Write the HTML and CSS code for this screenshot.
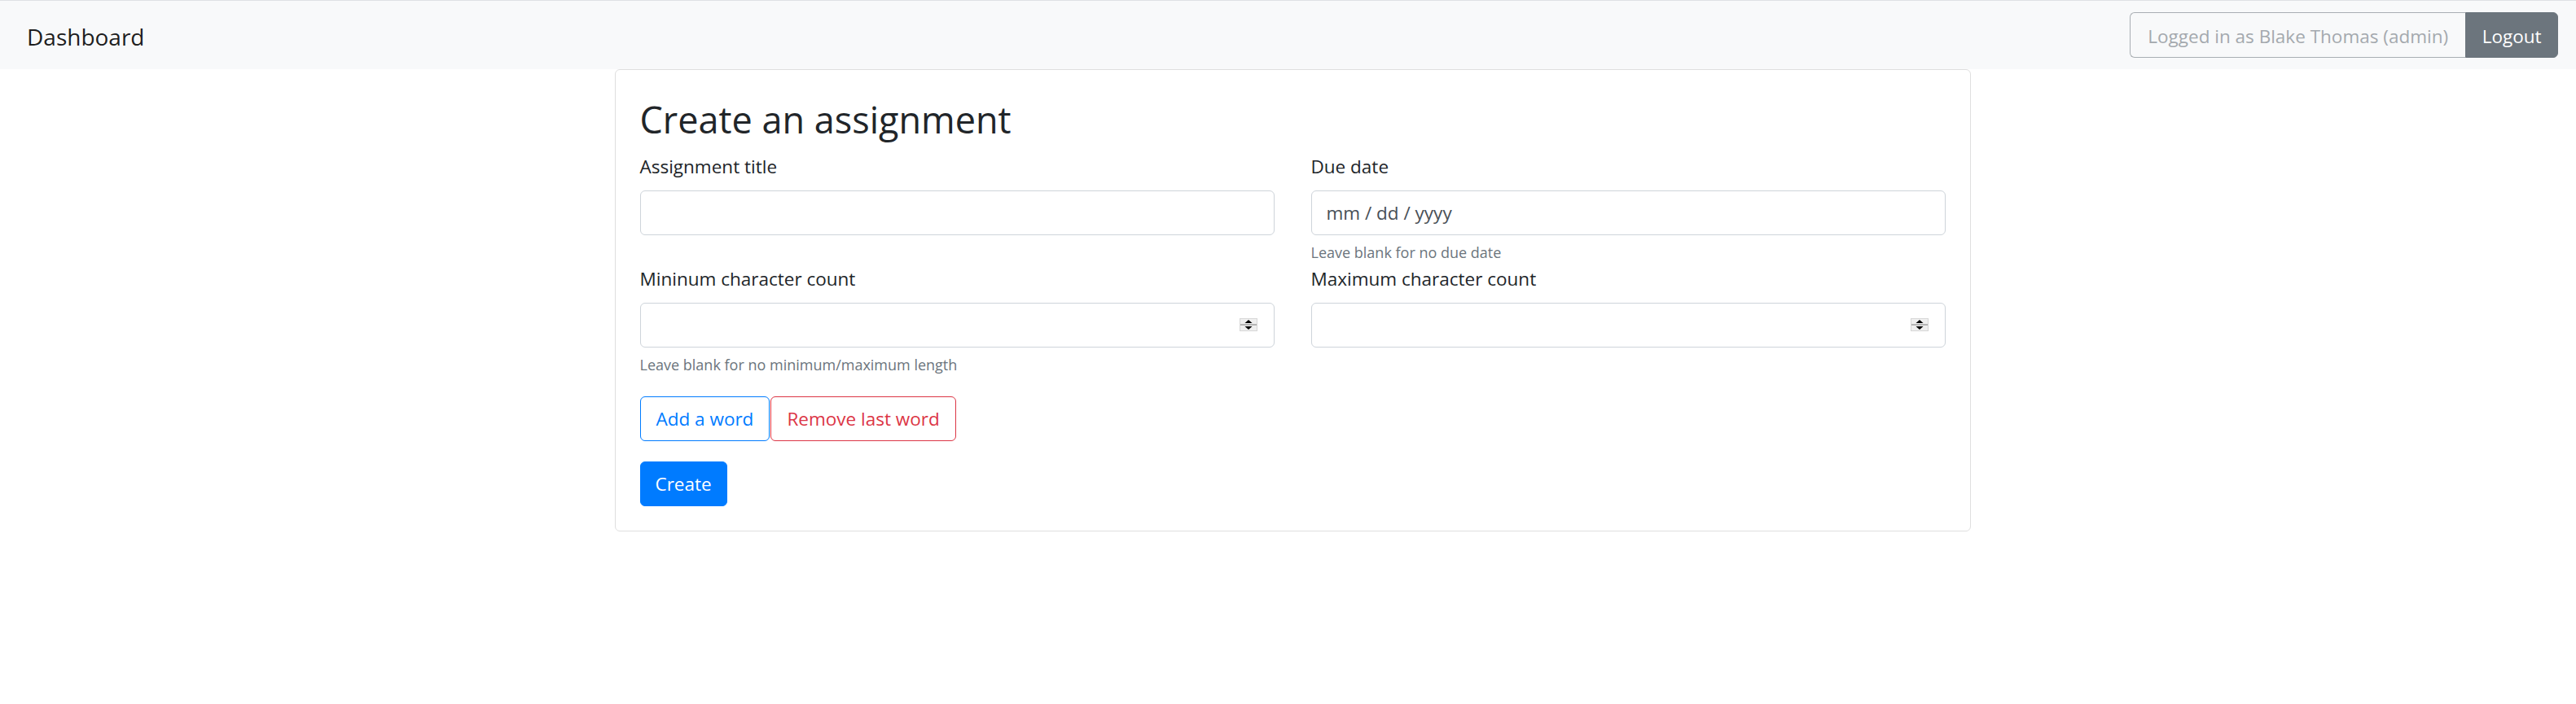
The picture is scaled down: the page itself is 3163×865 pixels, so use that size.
FILE: index.html
```html
<!DOCTYPE html>
<html lang="en">
<head>
<meta charset="utf-8">
<title>Create an assignment</title>
<link rel="stylesheet" href="styles.css">
</head>
<body>
<nav class="navbar">
  <a class="brand" href="#">Dashboard</a>
  <div class="user-group">
    <span class="user-label">Logged in as Blake Thomas (admin)</span>
    <button class="btn-logout" type="button">Logout</button>
  </div>
</nav>
<main class="main">
  <section class="card">
    <h2 class="card-title">Create an assignment</h2>
    <form class="form-grid">
      <div class="field">
        <label class="field-label">Assignment title</label>
        <div class="control"><input class="control-input" type="text"></div>
      </div>
      <div class="field">
        <label class="field-label">Due date</label>
        <div class="control"><input class="control-input date-input" type="text" placeholder="mm / dd / yyyy"></div>
        <small class="help">Leave blank for no due date</small>
      </div>
      <div class="field">
        <label class="field-label">Mininum character count</label>
        <div class="control number">
          <input class="control-input" type="text">
          <svg class="spin" width="22" height="16" viewBox="0 0 22 16" aria-hidden="true">
            <rect x="0.5" y="0.5" width="21" height="15" fill="#efefef" stroke="#d6d6d6"/>
            <rect x="1" y="7" width="20" height="2" fill="#b4b4b4"/>
            <polygon points="11,2 6.5,6 15.5,6" fill="#000"/>
            <polygon points="6.5,10 15.5,10 11,14" fill="#000"/>
          </svg>
        </div>
        <small class="help">Leave blank for no minimum/maximum length</small>
      </div>
      <div class="field">
        <label class="field-label">Maximum character count</label>
        <div class="control number">
          <input class="control-input" type="text">
          <svg class="spin" width="22" height="16" viewBox="0 0 22 16" aria-hidden="true">
            <rect x="0.5" y="0.5" width="21" height="15" fill="#efefef" stroke="#d6d6d6"/>
            <rect x="1" y="7" width="20" height="2" fill="#b4b4b4"/>
            <polygon points="11,2 6.5,6 15.5,6" fill="#000"/>
            <polygon points="6.5,10 15.5,10 11,14" fill="#000"/>
          </svg>
        </div>
      </div>
    </form>
    <div class="word-buttons">
      <button class="btn btn-outline-primary" type="button">Add a word</button>
      <button class="btn btn-outline-danger" type="button">Remove last word</button>
    </div>
    <div class="actions">
      <button class="btn btn-primary" type="button">Create</button>
    </div>
  </section>
</main>
</body>
</html>
```
FILE: styles.css
```css
* {
  box-sizing: border-box;
}

body {
  margin: 0;
  background: #ffffff;
  font-family: "Open Sans", "Noto Sans", sans-serif;
  font-size: 22.5px;
  color: #212529;
}

.navbar {
  display: flex;
  align-items: center;
  justify-content: space-between;
  height: 85px;
  padding: 0 22px 0 33px;
  background: #f8f9fa;
  border-top: 1px solid #dfe1e4;
}

.brand {
  margin-top: 4px;
  font-size: 28px;
  line-height: 42px;
  color: rgba(0, 0, 0, 0.9);
  text-decoration: none;
}

.user-group {
  display: flex;
  height: 56px;
}

.user-label {
  display: flex;
  align-items: center;
  padding: 2px 21px 0 21px;
  border: 1px solid #a9aeb3;
  border-right: none;
  border-radius: 6px 0 0 6px;
  color: #a4a9ae;
  font-size: 22.5px;
  white-space: nowrap;
}

.btn-logout {
  padding: 2px 19.5px 0;
  border: 1px solid #6c757d;
  border-radius: 0 6px 6px 0;
  background: #6c757d;
  color: #ffffff;
  font-family: inherit;
  font-size: 22.5px;
}

.main {
  display: flex;
  justify-content: center;
  padding-left: 11px;
}

.card {
  width: 1665px;
  padding: 30px;
  border: 1px solid #dfdfdf;
  border-radius: 6px;
  background: #ffffff;
}

.card-title {
  margin: 0 0 9px;
  font-size: 45px;
  font-weight: 400;
  line-height: 62px;
  color: #212529;
}

.form-grid {
  display: grid;
  grid-template-columns: 1fr 1fr;
  column-gap: 45px;
  align-items: start;
  margin: 0;
}

.field {
  display: flex;
  flex-direction: column;
}

.field-label {
  display: block;
  margin-bottom: 11px;
  font-size: 22.5px;
  line-height: 36px;
  color: #212529;
}

.control {
  display: flex;
  align-items: center;
  height: 55px;
  border: 1px solid #ced4da;
  border-radius: 6px;
  background: #ffffff;
}

.control-input {
  flex: 1;
  min-width: 0;
  height: 100%;
  padding: 0 18px;
  border: none;
  outline: none;
  background: transparent;
  font-family: inherit;
  font-size: 22.5px;
  color: #495057;
}

.date-input::placeholder {
  color: #495057;
  opacity: 1;
}

.number {
  padding-right: 20px;
}

.spin {
  flex: none;
  display: block;
}

.help {
  display: block;
  margin-top: 7px;
  font-size: 18px;
  line-height: 28.8px;
  color: #6c757d;
}

.word-buttons {
  display: flex;
  gap: 1px;
  margin-top: 24px;
}

.actions {
  display: flex;
  margin-top: 25px;
}

.btn {
  height: 55px;
  padding: 2px 19px 0;
  border: 1px solid transparent;
  border-radius: 6px;
  background: #ffffff;
  font-family: inherit;
  font-size: 22.5px;
  line-height: 1;
  cursor: pointer;
}

.btn-outline-primary {
  border-color: #007bff;
  color: #007bff;
}

.btn-outline-danger {
  border-color: #dc3545;
  color: #dc3545;
}

.btn-primary {
  padding: 2px 18px 0;
  border-color: #007bff;
  background: #007bff;
  color: #ffffff;
}
```
